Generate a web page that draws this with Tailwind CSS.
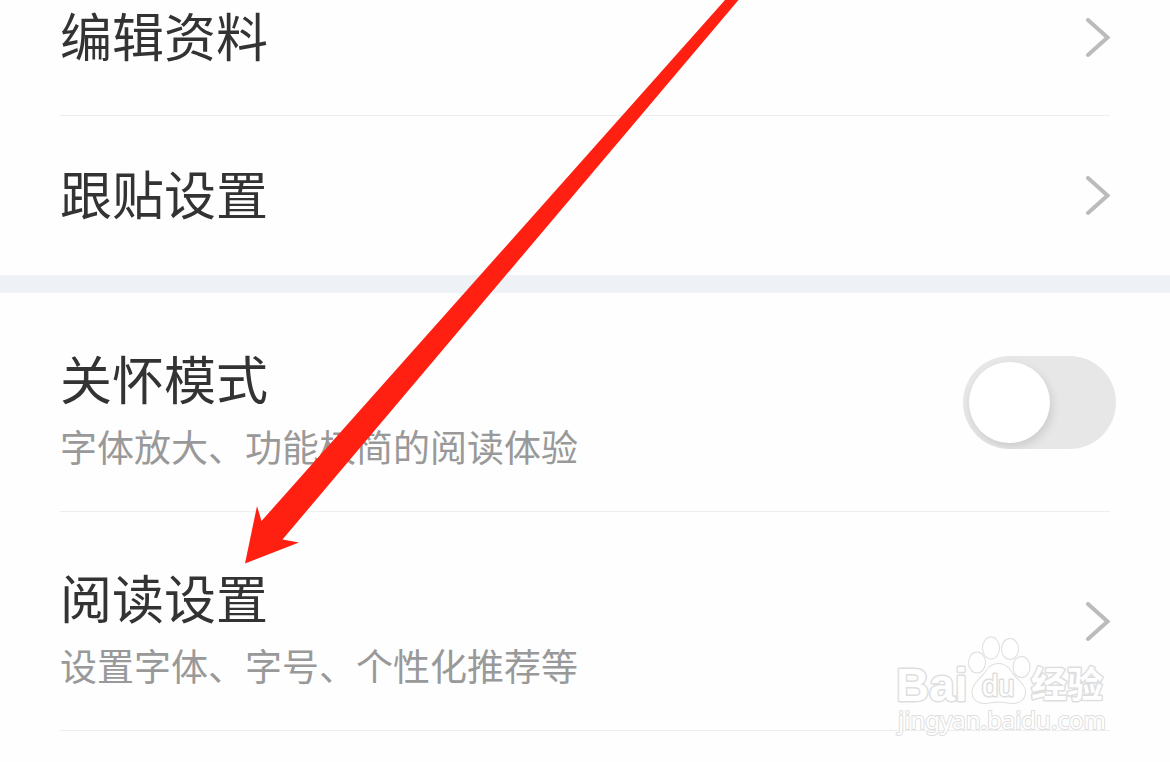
<!DOCTYPE html>
<html lang="zh-CN">
<head>
  <meta charset="UTF-8">
  <meta name="viewport" content="width=device-width, initial-scale=1.0">
  <title>设置</title>
  <script src="https://cdn.jsdelivr.net/npm/@tailwindcss/browser@4"></script>
</head>
<body class="bg-[#fefefe] font-['Noto_Sans_CJK_SC',sans-serif] text-[#333333]">
  <div class="relative min-h-screen overflow-hidden">
    <main>
      <section class="px-15">
        <a href="#" class="flex items-center justify-between pb-10 border-b border-[#eeeeee]">
          <span class="pb-[6px] text-[52px] leading-[69px]">编辑资料</span>
          <svg class="w-6 h-10" viewBox="0 0 24 40" fill="none" stroke="#bbbbbb" stroke-width="4" stroke-linecap="round"><path d="M2 2L21.500 19.500L2 37"/></svg>
        </a>
        <a href="#" class="flex items-center justify-between py-10">
          <span class="pb-[6px] text-[52px] leading-[73px]">跟贴设置</span>
          <svg class="w-6 h-10" viewBox="0 0 24 40" fill="none" stroke="#bbbbbb" stroke-width="4" stroke-linecap="round"><path d="M2 2L21.500 19.500L2 37"/></svg>
        </a>
      </section>

      <div class="h-[18px] bg-[#eef1f5]"></div>

      <section class="px-15">
        <div class="flex items-center justify-between pt-[53px] pb-8 border-b border-[#eeeeee]">
          <label for="care-mode">
            <span class="block text-[52px] leading-[64px]">关怀模式</span>
            <span class="block mt-[3px] text-[37px] leading-[66px] text-[#999999]">字体放大、功能极简的阅读体验</span>
          </label>
          <input id="care-mode" type="checkbox" role="switch" class="appearance-none relative overflow-hidden -mt-5 -mr-[6px] w-[153px] h-[93px] rounded-full bg-[#e7e7e7] before:content-[''] before:absolute before:left-[6px] before:top-[6px] before:size-[81px] before:rounded-full before:bg-white before:shadow-[2px_4px_10px_rgba(0,0,0,0.12)]">
        </div>
        <a href="#" class="flex items-center justify-between pt-[53px] pb-8 border-b border-[#eeeeee]">
          <span>
            <span class="block text-[52px] leading-[64px]">阅读设置</span>
            <span class="block mt-[3px] text-[37px] leading-[66px] text-[#999999]">设置字体、字号、个性化推荐等</span>
          </span>
          <svg class="-mt-5 w-6 h-10" viewBox="0 0 24 40" fill="none" stroke="#bbbbbb" stroke-width="4" stroke-linecap="round"><path d="M2 2L21.500 19.500L2 37"/></svg>
        </a>
      </section>
    </main>

    <!-- pointer arrow -->
    <svg class="absolute left-0 top-0 w-[740px] h-[570px] pointer-events-none" viewBox="0 0 740 570" fill="#ff2012">
      <path d="M725 0H738.500L282.500 539.500L299 542.500L245 563.500L257 506L261.500 521Z"/>
    </svg>

    <!-- watermark -->
    <svg class="absolute right-[60px] top-[630px] w-[220px] h-[112px] pointer-events-none" viewBox="0 0 220 112" fill="#ffffff" stroke="#dedede" stroke-width="3" stroke-linejoin="round" paint-order="stroke">
      <text x="6" y="71" font-family="Liberation Sans, sans-serif" font-size="46" font-weight="700">Bai</text>
      <g stroke-width="2">
        <ellipse cx="87" cy="32.500" rx="8" ry="10"/>
        <ellipse cx="101" cy="18" rx="8" ry="10.500"/>
        <ellipse cx="120" cy="19" rx="8" ry="10"/>
        <ellipse cx="131.500" cy="37" rx="8" ry="10"/>
        <path d="M108.500 34C102 34 98 38 95 43C91 49 82 54 82.500 63C83 70 89 73 95 73C100 73 103 71.500 109 71.500C114 71.500 118 73 123 73C130 73 135 69 135 62C135 54 126 50 122 43C119 38 115 34 108.500 34Z"/>
      </g>
      <text x="92" y="66" font-family="Liberation Sans, sans-serif" font-size="29">du</text>
      <text x="141" y="68" font-family="Noto Sans CJK SC, sans-serif" font-size="36" font-weight="700">经验</text>
      <text x="8" y="99" font-family="Noto Sans, sans-serif" font-size="24" stroke-width="2">jingyan.baidu.com</text>
    </svg>
  </div>
</body>
</html>
